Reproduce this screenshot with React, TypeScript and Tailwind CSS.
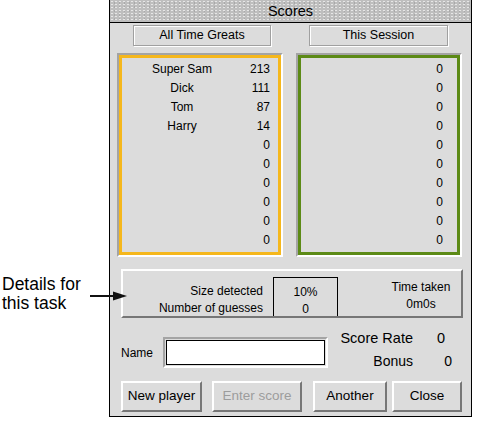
const allTime = [
  { name: "Super Sam", score: 213 },
  { name: "Dick", score: 111 },
  { name: "Tom", score: 87 },
  { name: "Harry", score: 14 },
  { name: "", score: 0 },
  { name: "", score: 0 },
  { name: "", score: 0 },
  { name: "", score: 0 },
  { name: "", score: 0 },
  { name: "", score: 0 },
];

const session = Array.from({ length: 10 }, () => ({ name: "", score: 0 }));

const raised =
  "border-2 border-t-white border-l-white border-r-[#767676] border-b-[#767676]";
const sunken =
  "border-2 border-t-[#a4a4a4] border-l-[#a4a4a4] border-r-white border-b-white";

function ScoreTable({
  rows,
  color,
  showNames,
}: {
  rows: { name: string; score: number }[];
  color: string;
  showNames: boolean;
}) {
  return (
    <div className={`h-[204px] w-[166px] ${sunken}`}>
      <div className={`h-full border-[3px] pt-[2px] ${color}`}>
        {rows.map((r, i) => (
          <div key={i} className="flex h-[19px] text-[12px] leading-[19px]">
            {showNames ? (
              <>
                <div className="w-[120px] text-center">{r.name}</div>
                <div className="flex-1 pr-[8px] text-right">{r.score}</div>
              </>
            ) : (
              <div className="flex-1 pr-[14px] text-right">{r.score}</div>
            )}
          </div>
        ))}
      </div>
    </div>
  );
}

function Label({ text, className }: { text: string; className: string }) {
  return (
    <div
      className={`flex h-[21px] items-center justify-center border border-[#a0a0a0] text-[12.5px] shadow-[1px_1px_0_#ffffff,inset_1px_1px_0_#ffffff] ${className}`}
    >
      {text}
    </div>
  );
}

export default function App() {
  return (
    <div className="relative h-[422px] w-[478px] overflow-hidden bg-white font-['Liberation_Sans',Arial,sans-serif] text-black">
      {/* Window */}
      <div className="ml-[109px] w-[363px] border-x border-b border-black bg-[#dcdcdc]">
        {/* Title bar */}
        <div className="h-[23px] border-b border-black bg-[#bebebe] bg-[radial-gradient(circle,#e6e6e6_0.8px,transparent_1px),radial-gradient(circle,#a9a9a9_0.7px,transparent_0.9px)] bg-[length:4px_3px,5px_4px] bg-[position:0_0,2px_1px] text-center text-[14.5px] leading-[22px]">
          Scores
        </div>

        <div className="pt-[2px] pb-[4px]">
          {/* Tabs */}
          <div className="flex">
            <Label text="All Time Greats" className="ml-[23px] w-[138px]" />
            <Label text="This Session" className="ml-[38px] w-[139px]" />
          </div>

          {/* Tables */}
          <div className="mt-[7px] flex">
            <div className="ml-[7px]">
              <ScoreTable rows={allTime} color="border-[#f5b71c]" showNames />
            </div>
            <div className="ml-[13px]">
              <ScoreTable
                rows={session}
                color="border-[#5c8a16]"
                showNames={false}
              />
            </div>
          </div>

          {/* Details for this task */}
          <div className={`ml-[11px] mt-[12px] flex h-[49px] w-[342px] ${raised}`}>
            <div className="w-[140px] pt-[12px] text-right text-[12px] leading-[17px]">
              Size detected
              <br />
              Number of guesses
            </div>
            <div className="ml-[10px] mt-[6px] w-[65px] border-x border-t border-black pt-[6px] text-center text-[12px] leading-[17px]">
              10%
              <br />0
            </div>
            <div className="ml-[43px] w-[80px] pt-[8px] text-center text-[12px] leading-[17px]">
              Time taken
              <br />
              0m0s
            </div>
          </div>

          {/* Name row */}
          <div className="mt-[19px] flex h-[31px]">
            <div className="ml-[11px] w-[42px] self-center text-[12px]">Name</div>
            <div className={`w-[165px] p-px ${sunken}`}>
              <div className="h-full border border-black bg-white" />
            </div>
            <div className="-mt-[10px]">
              <div className="flex h-[23px] items-center text-[14.5px]">
                <div className="w-[85px] text-right">Score Rate</div>
                <div className="w-[39px] pr-[7px] text-right">0</div>
              </div>
              <div className="flex h-[23px] items-center text-[14px]">
                <div className="w-[85px] text-right">Bonus</div>
                <div className="w-[39px] text-right">0</div>
              </div>
            </div>
          </div>

          {/* Buttons */}
          <div className="mt-[13px] flex h-[31px] text-[13.5px]">
            <div className={`ml-[11px] flex w-[81px] items-center justify-center ${raised}`}>
              New player
            </div>
            <div
              className={`ml-[10px] flex w-[90px] items-center justify-center text-[#9c9c9c] ${raised}`}
            >
              Enter score
            </div>
            <div className={`ml-[11px] flex w-[74px] items-center justify-center ${raised}`}>
              Another
            </div>
            <div className={`ml-[5px] flex w-[70px] items-center justify-center ${raised}`}>
              Close
            </div>
          </div>
        </div>
      </div>

      {/* Annotation */}
      <div className="absolute left-[2px] top-[275px] text-[17.5px] leading-[19px]">
        Details for
        <br />
        this task
      </div>
      <svg
        className="absolute left-[88px] top-[290px]"
        width="42"
        height="12"
        viewBox="0 0 42 12"
      >
        <line x1="2" y1="6" x2="28" y2="6" stroke="#111" strokeWidth="2" />
        <polygon points="25,1.5 39,6 25,10.5" fill="#111" />
      </svg>
    </div>
  );
}
